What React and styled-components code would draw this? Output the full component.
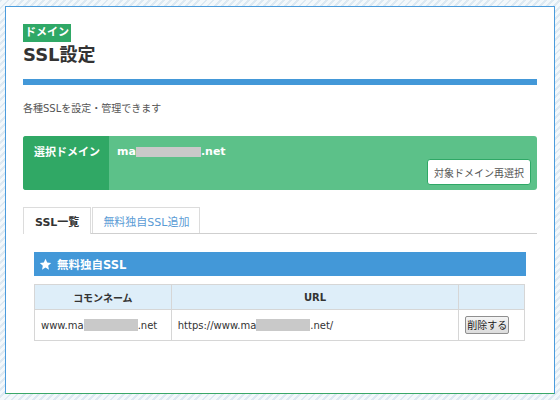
import React from "react";
import styled, { createGlobalStyle } from "styled-components";

const Global = createGlobalStyle`
  html, body { margin: 0; padding: 0; }
  body {
    width: 560px;
    height: 400px;
    overflow: hidden;
    font-family: "DejaVu Sans", "Noto Sans CJK JP", sans-serif;
    color: #333;
    background: repeating-linear-gradient(135deg, #dde9f2 0 2px, #f3f8fb 2px 5px);
  }
`;

const Panel = styled.div`
  box-sizing: border-box;
  margin: 6px 5px 0 5px;
  height: 388px;
  background: #fff;
  border: 1px solid #4a9bdc;
  border-bottom: 1px solid #3aa868;
  padding: 17px 17px 0 17px;
  display: flex;
  flex-direction: column;
`;

const Badge = styled.span`
  align-self: flex-start;
  display: inline-block;
  background: #2fa866;
  color: #fff;
  font-size: 11px;
  font-weight: bold;
  height: 18px;
  line-height: 18px;
  padding: 0 2px;
`;

const Title = styled.h1`
  margin: 2px 0 0;
  font-size: 18px;
  line-height: 22px;
  font-weight: bold;
  color: #333;
`;

const Rule = styled.div`
  height: 6px;
  background: #4398d8;
  margin-top: 13px;
`;

const Desc = styled.p`
  margin: 17px 0 0;
  font-size: 10px;
  line-height: 14px;
  color: #555;
`;

const DomainBox = styled.div`
  margin-top: 20px;
  height: 54px;
  display: flex;
  border-radius: 3px;
  overflow: hidden;
  background: #5cc189;
`;

const DomainLabel = styled.div`
  width: 86px;
  flex: none;
  background: #30a865;
  color: #fff;
  font-weight: bold;
  font-size: 11px;
  line-height: 14px;
  padding: 10px 0 0 11px;
  box-sizing: border-box;
  white-space: nowrap;
`;

const DomainBody = styled.div`
  flex: 1;
  display: flex;
  flex-direction: column;
  padding: 9px 6px 5px 8px;
`;

const DomainValue = styled.div`
  color: #fff;
  font-weight: bold;
  font-size: 11px;
  line-height: 14px;
  display: flex;
  align-items: center;
`;

const Mask = styled.span`
  display: inline-block;
  background: #c9c9c9;
  width: ${(p) => p.$w}px;
  height: ${(p) => p.$h}px;
`;

const ReselectButton = styled.button`
  align-self: flex-end;
  height: 26px;
  box-sizing: border-box;
  background: #fff;
  border: 1px solid #2fa866;
  border-radius: 3px;
  padding: 0 6px;
  font-family: "Noto Sans CJK JP", sans-serif;
  font-size: 10px;
  color: #555;
  white-space: nowrap;
  min-width: 103px;
`;

const Tabs = styled.div`
  margin-top: 17px;
  display: flex;
  align-items: flex-end;
  gap: 1px;
  border-bottom: 1px solid #cfcfcf;
`;

const Tab = styled.div`
  box-sizing: border-box;
  flex: none;
  display: flex;
  align-items: center;
  justify-content: center;
  white-space: nowrap;
  padding: 0 ${(p) => (p.$active ? 11 : 10)}px;
  border: 1px solid #dcdcdc;
  border-bottom: none;
  background: #fff;
  font-size: 11px;
  font-weight: ${(p) => (p.$active ? "bold" : "normal")};
  color: ${(p) => (p.$active ? "#333" : "#5a9bd5")};
  margin-bottom: ${(p) => (p.$active ? "-1px" : "0")};
  height: ${(p) => (p.$active ? "27px" : "26px")};
`;

const Section = styled.div`
  margin: 18px 11px 0 11px;
`;

const SectionHead = styled.div`
  height: 24px;
  background: #4398d8;
  color: #fff;
  font-weight: bold;
  font-size: 11.5px;
  display: flex;
  align-items: center;
  gap: 5px;
  padding-left: 5px;
`;

const Table = styled.table`
  margin-top: 8px;
  width: 491px;
  border-collapse: collapse;
  font-size: 10px;
`;

const Th = styled.th`
  height: 24px;
  padding: 0;
  background: #deeef9;
  border: 1px solid #d6d6d6;
  font-weight: bold;
  color: #333;
  width: ${(p) => p.$w}px;
`;

const Td = styled.td`
  height: 30px;
  padding: 0 6px;
  border: 1px solid #d6d6d6;
  color: #333;
  white-space: nowrap;
`;

const Cell = styled.span`
  display: inline-flex;
  align-items: center;
`;

const DeleteButton = styled.button`
  font-family: "Noto Sans CJK JP", sans-serif;
  font-size: 10px;
  color: #222;
  height: 18px;
  padding: 0 1px;
  border: 1px solid #8f8f8f;
  border-radius: 2px;
  background: linear-gradient(#f4f4f4, #dcdcdc);
  line-height: 14px;
  white-space: nowrap;
`;

const Star = () => (
  <svg width="13" height="13" viewBox="0 0 24 24">
    <polygon
      fill="#fff"
      points="12,1.5 15.1,8.4 22.5,9.1 16.9,14.1 18.5,21.5 12,17.7 5.5,21.5 7.1,14.1 1.5,9.1 8.9,8.4"
    />
  </svg>
);

export default function App() {
  return (
    <>
      <Global />
      <Panel>
        <Badge>ドメイン</Badge>
        <Title>SSL設定</Title>
        <Rule />
        <Desc>各種SSLを設定・管理できます</Desc>
        <DomainBox>
          <DomainLabel>選択ドメイン</DomainLabel>
          <DomainBody>
            <DomainValue>
              ma<Mask $w={65} $h={10} />.net
            </DomainValue>
            <ReselectButton>対象ドメイン再選択</ReselectButton>
          </DomainBody>
        </DomainBox>
        <Tabs>
          <Tab $active>SSL一覧</Tab>
          <Tab>無料独自SSL追加</Tab>
        </Tabs>
        <Section>
          <SectionHead>
            <Star />
            無料独自SSL
          </SectionHead>
          <Table>
            <thead>
              <tr>
                <Th $w={136}>コモンネーム</Th>
                <Th $w={290}>URL</Th>
                <Th $w={65}></Th>
              </tr>
            </thead>
            <tbody>
              <tr>
                <Td>
                  <Cell>
                    www.ma<Mask $w={54} $h={12} />.net
                  </Cell>
                </Td>
                <Td>
                  <Cell>
                    https://www.ma<Mask $w={54} $h={12} />.net/
                  </Cell>
                </Td>
                <Td>
                  <DeleteButton>削除する</DeleteButton>
                </Td>
              </tr>
            </tbody>
          </Table>
        </Section>
      </Panel>
    </>
  );
}
